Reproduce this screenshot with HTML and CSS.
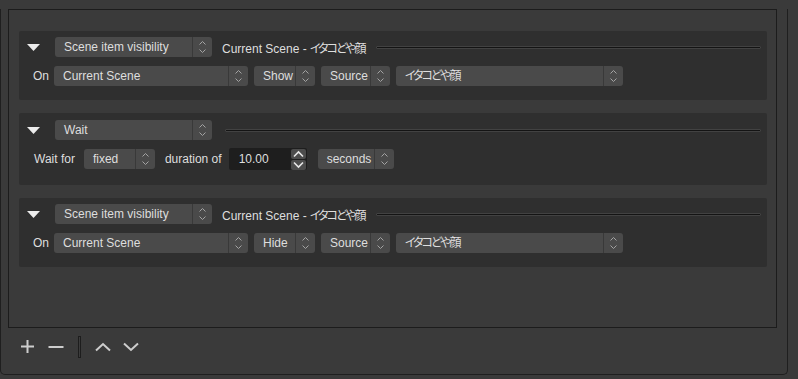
FILE: index.html
```html
<!DOCTYPE html>
<html lang="ja">
  <head>
    <meta charset="UTF-8" />
    <meta name="viewport" content="width=device-width, initial-scale=1.0" />
    <title>Macro actions</title>
    <link rel="stylesheet" href="styles.css">
  </head>
  <body>
    <div class="dock">
      <div class="list">

        <div class="action">
          <div class="head">
            <svg class="caret" width="13" height="7" viewBox="0 0 13 7"><polygon points="0,0 13,0 6.5,7" fill="#ececec"/></svg>
            <div class="combo w-type"><span class="val">Scene item visibility</span><span class="arr"><svg width="19" height="20" viewBox="0 0 19 20"><polyline points="6.5,7.5 9.5,4.5 12.5,7.5" /><polyline points="6.5,12.5 9.5,15.5 12.5,12.5" /></svg></span></div>
            <span class="title">Current Scene - <span class="jp">イタコどや顔</span></span>
            <span class="rule"></span>
          </div>
          <div class="row">
            <span class="lbl lbl-on">On</span>
            <div class="combo w-scene"><span class="val">Current Scene</span><span class="arr"><svg width="19" height="20" viewBox="0 0 19 20"><polyline points="6.5,7.5 9.5,4.5 12.5,7.5" /><polyline points="6.5,12.5 9.5,15.5 12.5,12.5" /></svg></span></div>
            <div class="combo w-show"><span class="val">Show</span><span class="arr"><svg width="19" height="20" viewBox="0 0 19 20"><polyline points="6.5,7.5 9.5,4.5 12.5,7.5" /><polyline points="6.5,12.5 9.5,15.5 12.5,12.5" /></svg></span></div>
            <div class="combo w-source"><span class="val">Source</span><span class="arr"><svg width="19" height="20" viewBox="0 0 19 20"><polyline points="6.5,7.5 9.5,4.5 12.5,7.5" /><polyline points="6.5,12.5 9.5,15.5 12.5,12.5" /></svg></span></div>
            <div class="combo w-item"><span class="val"><span class="jp">イタコどや顔</span></span><span class="arr"><svg width="19" height="20" viewBox="0 0 19 20"><polyline points="6.5,7.5 9.5,4.5 12.5,7.5" /><polyline points="6.5,12.5 9.5,15.5 12.5,12.5" /></svg></span></div>
          </div>
        </div>

        <div class="action action-wait">
          <div class="head">
            <svg class="caret" width="13" height="7" viewBox="0 0 13 7"><polygon points="0,0 13,0 6.5,7" fill="#ececec"/></svg>
            <div class="combo w-type"><span class="val">Wait</span><span class="arr"><svg width="19" height="20" viewBox="0 0 19 20"><polyline points="6.5,7.5 9.5,4.5 12.5,7.5" /><polyline points="6.5,12.5 9.5,15.5 12.5,12.5" /></svg></span></div>
            <span class="rule rule-wait"></span>
          </div>
          <div class="row">
            <span class="lbl lbl-wait">Wait for</span>
            <div class="combo w-fixed"><span class="val">fixed</span><span class="arr"><svg width="19" height="20" viewBox="0 0 19 20"><polyline points="6.5,7.5 9.5,4.5 12.5,7.5" /><polyline points="6.5,12.5 9.5,15.5 12.5,12.5" /></svg></span></div>
            <span class="lbl lbl-dur">duration of</span>
            <div class="spin">
              <span class="spin-val">10.00</span>
              <span class="spin-btns">
                <span class="sbtn"><svg width="15" height="10" viewBox="0 0 15 10"><polyline points="3,7.5 7.5,3 12,7.5" /></svg></span>
                <span class="sbtn"><svg width="15" height="10" viewBox="0 0 15 10"><polyline points="3,2.5 7.5,7 12,2.5" /></svg></span>
              </span>
            </div>
            <div class="combo w-sec"><span class="val">seconds</span><span class="arr"><svg width="19" height="20" viewBox="0 0 19 20"><polyline points="6.5,7.5 9.5,4.5 12.5,7.5" /><polyline points="6.5,12.5 9.5,15.5 12.5,12.5" /></svg></span></div>
          </div>
        </div>

        <div class="action">
          <div class="head">
            <svg class="caret" width="13" height="7" viewBox="0 0 13 7"><polygon points="0,0 13,0 6.5,7" fill="#ececec"/></svg>
            <div class="combo w-type"><span class="val">Scene item visibility</span><span class="arr"><svg width="19" height="20" viewBox="0 0 19 20"><polyline points="6.5,7.5 9.5,4.5 12.5,7.5" /><polyline points="6.5,12.5 9.5,15.5 12.5,12.5" /></svg></span></div>
            <span class="title">Current Scene - <span class="jp">イタコどや顔</span></span>
            <span class="rule"></span>
          </div>
          <div class="row">
            <span class="lbl lbl-on">On</span>
            <div class="combo w-scene"><span class="val">Current Scene</span><span class="arr"><svg width="19" height="20" viewBox="0 0 19 20"><polyline points="6.5,7.5 9.5,4.5 12.5,7.5" /><polyline points="6.5,12.5 9.5,15.5 12.5,12.5" /></svg></span></div>
            <div class="combo w-show"><span class="val">Hide</span><span class="arr"><svg width="19" height="20" viewBox="0 0 19 20"><polyline points="6.5,7.5 9.5,4.5 12.5,7.5" /><polyline points="6.5,12.5 9.5,15.5 12.5,12.5" /></svg></span></div>
            <div class="combo w-source"><span class="val">Source</span><span class="arr"><svg width="19" height="20" viewBox="0 0 19 20"><polyline points="6.5,7.5 9.5,4.5 12.5,7.5" /><polyline points="6.5,12.5 9.5,15.5 12.5,12.5" /></svg></span></div>
            <div class="combo w-item"><span class="val"><span class="jp">イタコどや顔</span></span><span class="arr"><svg width="19" height="20" viewBox="0 0 19 20"><polyline points="6.5,7.5 9.5,4.5 12.5,7.5" /><polyline points="6.5,12.5 9.5,15.5 12.5,12.5" /></svg></span></div>
          </div>
        </div>

      </div>

      <div class="tools">
        <svg class="t-plus" width="15" height="15" viewBox="0 0 15 15"><path d="M7.5 1 V14 M1 7.5 H14" /></svg>
        <svg class="t-minus" width="16" height="4" viewBox="0 0 16 4"><path d="M0.5 2 H15.5" /></svg>
        <span class="t-sep"></span>
        <svg class="t-up" width="16" height="10" viewBox="0 0 16 10"><polyline points="1,8.5 8,2 15,8.5" /></svg>
        <svg class="t-down" width="16" height="10" viewBox="0 0 16 10"><polyline points="1,1.5 8,8 15,1.5" /></svg>
      </div>
    </div>
  </body>
</html>
```

FILE: styles.css
```css
body{
    margin: 0;
    padding: 0;
    background-color: #3a3a3a;
    font-family: "Liberation Sans", "Noto Sans CJK JP", sans-serif;
    font-size: 12px;
    font-feature-settings: "palt";
    color: #dedede;
    width: 798px;
    height: 379px;
    overflow: hidden;
}
.dock {
    width: 788px;
    height: 366px;
    box-sizing: border-box;
    border: 1px solid #1f1f1f;
    border-top: none;
    border-radius: 0 0 5px 5px;
}
.list {
    margin: 9px 10px 0 7px;
    height: 319px;
    box-sizing: border-box;
    border: 1px solid #1c1c1c;
    padding: 21px 9px 0 10px;
}

.jp {
    letter-spacing: -2px;
}

.action {
    background-color: #2f2f2f;
    border-radius: 2px;
    padding: 6px 0 14px 0;
    margin-bottom: 13px;
}
.action-wait {
    padding: 7px 0 15px 0;
}
.head {
    display: flex;
    align-items: center;
    height: 20px;
    padding-right: 6px;
}
.caret {
    margin-left: 8px;
    margin-right: 15px;
    flex: none;
}
.title {
    margin-left: 10px;
    white-space: nowrap;
}
.rule {
    flex: 1;
    height: 1px;
    margin-left: 12px;
    background-color: #141414;
    border: 1px solid #424242;
    border-radius: 1px;
}
.rule-wait {
    margin-left: 13px;
}

.row {
    display: flex;
    align-items: center;
    height: 20px;
    margin-top: 9px;
    padding-left: 14px;
    gap: 6px;
}
.action-wait .row {
    height: 22px;
    margin-top: 8px;
    padding-left: 15px;
}
.lbl {
    white-space: nowrap;
}
.lbl-on {
    margin-right: -1px;
}
.lbl-wait {
    margin-right: 3px;
}
.lbl-dur {
    margin-left: 4px;
    margin-right: 1px;
}

.combo {
    display: flex;
    height: 20px;
    background-color: #4a4a4a;
    border-radius: 3px;
    box-sizing: border-box;
    flex: none;
}
.combo .val {
    flex: 1;
    padding-left: 9px;
    line-height: 20px;
    white-space: nowrap;
    overflow: hidden;
}
.combo .arr {
    width: 19px;
    border-left: 1px solid #393939;
    display: flex;
}
.combo .arr polyline {
    fill: none;
    stroke: #a3a3a3;
    stroke-width: 1;
}
.w-type { width: 157px; }
.w-scene { width: 194px; }
.w-show { width: 61px; }
.w-source { width: 69px; }
.w-item { width: 227px; }
.w-fixed { width: 71px; }
.w-sec { width: 76px; margin-left: 5px; }

.spin {
    display: flex;
    align-items: center;
    width: 78px;
    height: 22px;
    background-color: #1e1e1e;
    border-radius: 2px;
    flex: none;
}
.spin-val {
    flex: 1;
    padding-left: 10px;
}
.spin-btns {
    display: flex;
    flex-direction: column;
    gap: 1px;
    margin-right: 1px;
}
.sbtn {
    display: flex;
    width: 15px;
    height: 10px;
    background-color: #4c4c4c;
    border-radius: 2px;
}
.sbtn polyline {
    fill: none;
    stroke: #e6e6e6;
    stroke-width: 1.6;
}

.tools {
    display: flex;
    align-items: center;
    height: 37px;
    padding-left: 19px;
}
.tools path, .tools polyline {
    fill: none;
    stroke: #cdcdcd;
    stroke-width: 2;
}
.t-minus {
    margin-left: 13px;
}
.t-sep {
    width: 1px;
    height: 20px;
    margin-left: 14px;
    background-color: #3c3c3c;
    border: 1px solid #1d1d1d;
}
.t-up {
    margin-left: 14px;
}
.t-down {
    margin-left: 12px;
}
```
